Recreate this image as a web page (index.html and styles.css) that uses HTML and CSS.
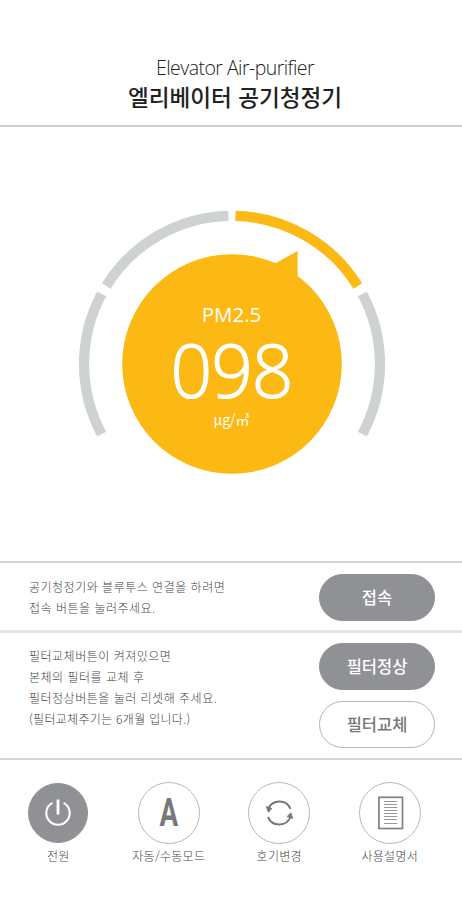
FILE: index.html
```html
<!DOCTYPE html>
<html lang="ko">
<head>
  <meta charset="UTF-8" />
  <meta name="viewport" content="width=device-width, initial-scale=1.0"/>
  <title>엘리베이터 공기청정기</title>
  <link rel="stylesheet" href="styles.css">
</head>
<body>

<div class="app">
  <header class="header">
    <p class="header-sub">Elevator Air-purifier</p>
    <h1 class="header-title">엘리베이터 공기청정기</h1>
  </header>

  <main class="gauge">
    <svg class="gauge-dial" viewBox="0 0 308 264" aria-hidden="true">
      <!-- scale segments -->
      <g fill="none" stroke="#cfd2d3" stroke-width="10.2">
        <path d="M23.7 224.2 A148.2 148.2 0 0 1 23.7 83.8"/>
        <path d="M28.2 76 A148.2 148.2 0 0 1 150.4 5.9"/>
        <path d="M284.3 83.8 A148.2 148.2 0 0 1 284.3 224.2"/>
        <path d="M157.5 5.9 A148.2 148.2 0 0 1 279.8 76" stroke="#fcb813"/>
      </g>
      <circle cx="154" cy="154" r="109.8" fill="#fcb813"/>
      <path d="M196 54 L219.6 41 V70 Z" fill="#fcb813"/>
    </svg>
    <div class="gauge-text">
      <span class="gauge-label">PM2.5</span>
      <strong class="gauge-value">098</strong>
      <span class="gauge-unit">μg/㎥</span>
    </div>
  </main>

  <section class="row row-connect">
    <p class="row-text">
      <span class="line">공기청정기와 블루투스 연결을 하려면</span>
      <span class="line">접속 버튼을 눌러주세요.</span>
    </p>
    <button class="btn btn-fill">접속</button>
  </section>

  <section class="row row-filter">
    <p class="row-text">
      <span class="line">필터교체버튼이 켜져있으면</span>
      <span class="line">본체의 필터를 교체 후</span>
      <span class="line">필터정상버튼을 눌러 리셋해 주세요.</span>
      <span class="line line-note">(필터교체주기는 6개월 입니다.)</span>
    </p>
    <div class="btn-group">
      <button class="btn btn-fill">필터정상</button>
      <button class="btn btn-line">필터교체</button>
    </div>
  </section>

  <nav class="menu">
    <a class="menu-item" href="#">
      <span class="menu-icon active">
        <svg viewBox="0 0 60 60" fill="none" stroke="#fff">
          <path d="M24.4 19.8 A11.7 11.7 0 1 0 35.6 19.8" stroke-width="2.1"/>
          <path d="M30 16.5 V31.5" stroke-width="2.8"/>
        </svg>
      </span>
      <span class="menu-name">전원</span>
    </a>
    <a class="menu-item" href="#">
      <span class="menu-icon"><b class="auto">A</b></span>
      <span class="menu-name">자동/수동모드</span>
    </a>
    <a class="menu-item" href="#">
      <span class="menu-icon">
        <svg viewBox="0 0 60 60" fill="none" stroke="#77787b" stroke-width="2">
          <path d="M19.3 25.5 A12.2 12.2 0 0 1 41.6 25.8"/>
          <path d="M41.7 33.5 A12.2 12.2 0 0 1 19 34"/>
          <path d="M17.3 23.6 L22.8 25.4 L19.4 29.2 Z" fill="#77787b" stroke-width="1"/>
          <path d="M43.6 35.4 L38.2 33.6 L41.8 29.8 Z" fill="#77787b" stroke-width="1"/>
        </svg>
      </span>
      <span class="menu-name">호기변경</span>
    </a>
    <a class="menu-item" href="#">
      <span class="menu-icon">
        <svg viewBox="0 0 60 60" fill="none" stroke="#808184">
          <rect x="18.9" y="14.3" width="23.6" height="31.2" stroke-width="1.7"/>
          <path d="M24 18.5 H37.2 M24 21.5 H37.2 M24 24.5 H37.2 M24 27.5 H37.2 M24 30.5 H37.2 M24 33.5 H37.2 M24 36.5 H37.2 M24 40.5 H37.2" stroke="#98999b" stroke-width="1"/>
        </svg>
      </span>
      <span class="menu-name">사용설명서</span>
    </a>
  </nav>
</div>

</body>
</html>
```
FILE: styles.css
```css
* {
  box-sizing: border-box;
}

body {
  margin: 0;
  background: #fff;
  font-family: "Noto Sans CJK KR", sans-serif;
}

.app {
  width: 462px;
  height: 900px;
  display: flex;
  flex-direction: column;
  overflow: hidden;
}

p, h1 {
  margin: 0;
}

.header {
  height: 127px;
  padding-top: 55px;
  border-bottom: 2px solid #cecece;
  text-align: center;
  white-space: nowrap;
}

.header-sub {
  font-family: "Open Sans", sans-serif;
  font-size: 19.5px;
  font-weight: 300;
  line-height: 26px;
  letter-spacing: -0.55px;
  color: #222;
  padding-left: 8px;
}

.header-title {
  font-size: 22.6px;
  font-weight: 500;
  line-height: 32px;
  color: #222;
  padding-left: 8px;
}

/* gauge */
.gauge {
  height: 434px;
  display: grid;
  justify-content: center;
  align-content: start;
  padding-top: 83px;
  padding-left: 1px;
}

.gauge-dial {
  grid-area: 1 / 1;
  width: 308px;
  height: 264px;
}

.gauge-text {
  grid-area: 1 / 1;
  display: flex;
  flex-direction: column;
  align-items: center;
  padding-top: 90px;
  color: #fff;
  font-family: "Open Sans", sans-serif;
}

.gauge-label {
  font-size: 20.5px;
  line-height: 28px;
}

.gauge-value {
  font-size: 73px;
  font-weight: 300;
  line-height: 84px;
  letter-spacing: -1px;
  -webkit-text-stroke: 1.2px #fff;
}

.gauge-unit {
  font-family: "Noto Sans CJK KR", sans-serif;
  font-size: 14px;
  line-height: 14px;
}

/* info rows */
.row {
  display: flex;
  justify-content: space-between;
  align-items: flex-start;
  padding: 0 27px 0 29px;
  border-top: 2px solid #d4d4d4;
}

.row-connect {
  height: 69px;
  padding-top: 11px;
}

.row-filter {
  height: 128px;
  padding-top: 10px;
  border-top: 3px solid #e6e6e6;
}

.row-text {
  font-size: 12px;
  line-height: 21px;
  font-weight: 300;
  letter-spacing: 0.5px;
  color: #444;
  padding-top: 2px;
}

.line {
  display: block;
  white-space: nowrap;
}

.line-note {
  letter-spacing: 0.3px;
}

.btn-group {
  display: flex;
  flex-direction: column;
  gap: 11px;
}

.btn {
  width: 116px;
  height: 47px;
  border: 1px solid #8f9194;
  border-radius: 24px;
  padding: 0 0 1px;
  font-family: inherit;
  font-size: 16.5px;
  font-weight: 500;
}

.btn-fill {
  background: #8f9194;
  color: #fff;
}

.btn-line {
  background: #fff;
  border-color: #b5b5b5;
  color: #77787b;
}

/* bottom menu */
.menu {
  flex: 1;
  display: flex;
  padding: 22px 17px 0 3px;
  border-top: 2px solid #d4d4d4;
}

.menu-item {
  width: 110.7px;
  display: flex;
  flex-direction: column;
  align-items: center;
  text-decoration: none;
}

.menu-icon {
  width: 62px;
  height: 62px;
  display: flex;
  justify-content: center;
  align-items: center;
  border: 1px solid #b8b8b8;
  border-radius: 50%;
}

.menu-icon.active {
  width: 60px;
  height: 60px;
  margin: 1px;
  background: #8f9194;
  border-color: #8f9194;
}

.menu-icon svg {
  width: 60px;
  height: 60px;
  flex-shrink: 0;
}

.auto {
  font-family: Roboto, sans-serif;
  font-size: 38px;
  line-height: 60px;
  color: #77787b;
  transform: scaleX(0.73);
}

.menu-name {
  font-size: 12px;
  font-weight: 300;
  line-height: 23px;
  letter-spacing: 0.3px;
  color: #444;
  white-space: nowrap;
}
```
